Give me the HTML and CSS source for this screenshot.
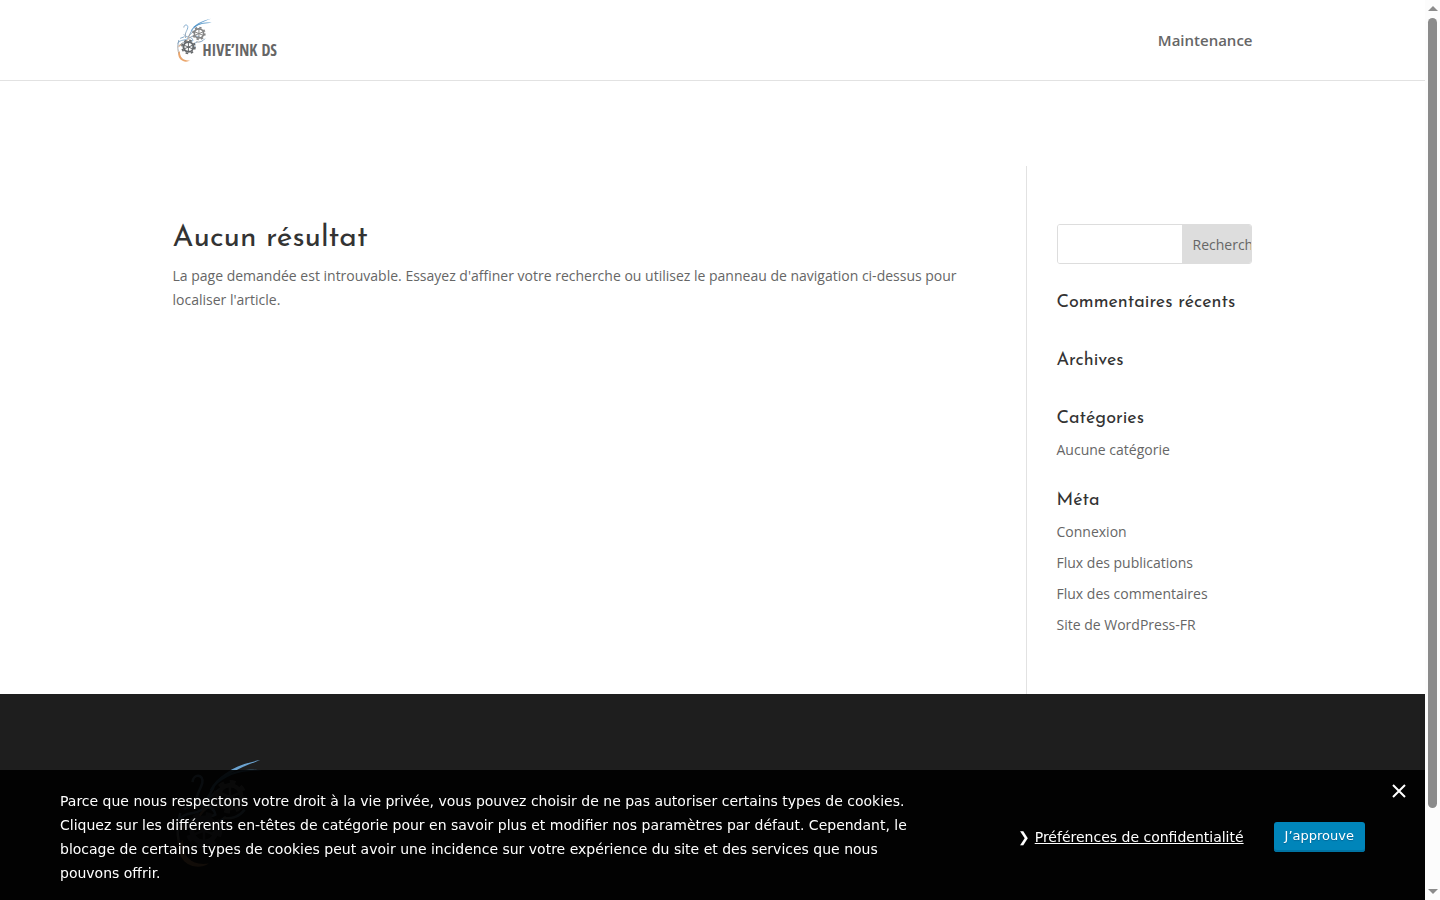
FILE: index.html
```html
<!DOCTYPE html>
<html lang="fr">
<head>
    <meta charset="UTF-8"/>
    <meta name="viewport" content="width=device-width, initial-scale=1"/>
    <title>Page non trouvée | Hive'Ink DS</title>
    <link rel="stylesheet" href="styles.css">
</head>
<body>
<svg class="sprite" aria-hidden="true">
    <defs>
        <linearGradient id="ink" x1="1" y1="0" x2="0" y2="1">
            <stop offset="0" stop-color="#7fb0d8"/>
            <stop offset="0.6" stop-color="#86a3bd"/>
            <stop offset="1" stop-color="#e3a06a"/>
        </linearGradient>
    </defs>
    <symbol id="mark" viewBox="0 0 105 140">
        <g fill="none" stroke="url(#ink)" stroke-width="3">
            <path d="M20 32C21 21 34 22 32 33C29 44 21 51 26 64"/>
            <path d="M20 53C28 65 45 57 48 72C36 79 17 70 7 90"/>
            <path d="M5 70C-2 92 2 121 20 132M1 80C14 66 20 74 33 65"/>
            <path d="M32 64C43 46 54 38 68 34M27 75C42 53 58 54 76 66"/>
            <path d="M9 65L22 60M3 89L16 79M42 88L61 75M45 95L56 89"/>
            <path d="M34 60C38 52 42 46 46 38M58 76C68 78 78 74 84 66"/>
        </g>
        <g fill="none" stroke="#858585">
            <circle cx="66" cy="50" r="14" stroke-width="5"/>
            <circle cx="66" cy="50" r="18" stroke-width="5" stroke-dasharray="7 7"/>
            <path d="M66 36V64M53 45L79 56M53 56L79 45" stroke-width="3"/>
        </g>
        <g fill="none" stroke="#66696c">
            <circle cx="34" cy="91" r="15" stroke-width="6"/>
            <circle cx="34" cy="91" r="20" stroke-width="5" stroke-dasharray="8 8"/>
            <path d="M34 77V105M21 86L47 97M21 97L47 86" stroke-width="3"/>
        </g>
        <path d="M8 103C7 125 20 135 40 132C24 142 2 132 3 110Z" fill="#eba66c"/>
        <path d="M41 42C51 23 75 10 103 5C79 14 57 23 44 42Z" fill="#6ba3d0"/>
        <path d="M50 30C67 17 87 15 105 18C86 18 67 20 52 33Z" fill="#5596c8"/>
    </symbol>
</svg>

<header class="header">
    <div class="container header-inner">
        <a class="logo" href="#">
            <svg class="logo-mark" aria-hidden="true"><use href="#mark"/></svg>
            <span class="logo-name">HIVE’INK DS</span>
        </a>
        <nav>
            <a class="nav-link" href="#">Maintenance</a>
        </nav>
    </div>
</header>

<main class="main">
    <div class="container content">
        <article class="article">
            <h1>Aucun résultat</h1>
            <p>La page demandée est introuvable. Essayez d'affiner votre recherche ou utilisez le panneau de navigation ci-dessus pour localiser l'article.</p>
        </article>
        <aside class="sidebar">
            <form class="search">
                <input type="text" class="search-field" aria-label="Rechercher"/>
                <button type="button" class="search-btn">Rechercher</button>
            </form>
            <section class="widget">
                <h4>Commentaires récents</h4>
            </section>
            <section class="widget">
                <h4>Archives</h4>
            </section>
            <section class="widget">
                <h4>Catégories</h4>
                <ul>
                    <li>Aucune catégorie</li>
                </ul>
            </section>
            <section class="widget">
                <h4>Méta</h4>
                <ul>
                    <li><a href="#">Connexion</a></li>
                    <li><a href="#">Flux des publications</a></li>
                    <li><a href="#">Flux des commentaires</a></li>
                    <li><a href="#">Site de WordPress-FR</a></li>
                </ul>
            </section>
        </aside>
    </div>
</main>

<footer class="footer">
    <div class="container">
        <svg class="footer-mark" aria-hidden="true"><use href="#mark"/></svg>
    </div>
</footer>

<div class="cookie-bar">
    <p class="cookie-text">Parce que nous respectons votre droit à la vie privée, vous pouvez choisir de ne pas autoriser certains types de cookies. Cliquez sur les différents en-têtes de catégorie pour en savoir plus et modifier nos paramètres par défaut. Cependant, le blocage de certains types de cookies peut avoir une incidence sur votre expérience du site et des services que nous pouvons offrir.</p>
    <div class="cookie-actions">
        <span class="cookie-prefs"><span class="chevron">❯</span><a href="#">Préférences de confidentialité</a></span>
        <button type="button" class="cookie-agree">J’approuve</button>
    </div>
    <button type="button" class="cookie-close" aria-label="Fermer">
        <svg viewBox="0 0 14 14" width="14" height="14"><path d="M1 1L13 13M13 1L1 13" stroke="#fff" stroke-width="2"/></svg>
    </button>
</div>

<div class="scrollbar" aria-hidden="true">
    <span class="arrow-up"></span>
    <span class="thumb"></span>
    <span class="arrow-down"></span>
</div>
</body>
</html>
```
FILE: styles.css
```css
* {
    box-sizing: border-box;
}

body {
    margin: 0;
    padding-right: 15px;
    min-height: 100vh;
    display: flex;
    flex-direction: column;
    background-color: #fff;
    color: #666;
    font-family: "Open Sans", Arial, sans-serif;
    font-size: 14px;
    line-height: 24px;
}

h1, h4, p, ul {
    margin: 0;
    padding: 0;
}

h1, h4 {
    color: #333;
    font-family: "Josefin Sans", Lato, sans-serif;
    font-weight: 400;
    padding-bottom: 10px;
}

h1 {
    font-size: 30px;
    line-height: 30px;
}

h4 {
    font-size: 18px;
    line-height: 18px;
}

a {
    color: inherit;
    text-decoration: none;
}

button {
    border: 0;
    cursor: pointer;
}

.sprite {
    position: absolute;
    width: 0;
    height: 0;
}

.container {
    width: 80%;
    max-width: 1080px;
    margin: 0 auto;
}

/* Header */
.header {
    border-bottom: 1px solid #e2e2e2;
}

.header-inner {
    display: flex;
    align-items: center;
    justify-content: space-between;
    height: 80px;
}

.logo {
    display: flex;
    align-items: center;
    padding-left: 4px;
}

.logo-mark {
    width: 35px;
    height: 46px;
}

.logo-name {
    margin: 20px 0 0 -9px;
    color: #666;
    font-family: "Open Sans Condensed", "Liberation Sans Narrow", "Liberation Sans", sans-serif;
    font-size: 16px;
    font-weight: 300;
}

.nav-link {
    font-size: 15px;
    font-weight: 600;
}

/* Content */
.main {
    padding-top: 85px;
}

.content {
    display: flex;
}

.article {
    flex: 1;
    padding: 58px 60px 0 0;
}

.sidebar {
    width: 227px;
    padding: 58px 1px 57px 30px;
    border-left: 1px solid #e2e2e2;
}

.search {
    display: flex;
    height: 40px;
    border: 1px solid #ddd;
    border-radius: 3px;
    overflow: hidden;
}

.search-field {
    flex: 1;
    min-width: 0;
    padding: 0 8px;
    border: 0;
    font: inherit;
}

.search-btn {
    width: 69px;
    padding: 1px 0 0 11px;
    background-color: #ddd;
    color: #666;
    font: inherit;
    text-align: left;
    white-space: nowrap;
    overflow: hidden;
}

.widget {
    margin-top: 30px;
}

.widget ul {
    list-style: none;
}

.widget li + li {
    margin-top: 7px;
}

/* Footer */
.footer {
    flex: 1;
    padding-top: 62px;
    background-color: #1e1e1e;
}

.footer-mark {
    display: block;
    width: 92px;
    height: 114px;
}

/* Cookie notice */
.cookie-bar {
    position: fixed;
    left: 0;
    right: 15px;
    bottom: 0;
    display: flex;
    justify-content: space-between;
    padding: 19px 60px 15px;
    background-color: rgba(0, 0, 0, 0.93);
    color: #fff;
    font-family: "DejaVu Sans", sans-serif;
}

.cookie-text {
    width: 65%;
}

.cookie-actions {
    display: flex;
    align-items: center;
    gap: 30px;
}

.cookie-prefs {
    display: flex;
    gap: 5px;
}

.cookie-prefs a {
    text-decoration: underline;
}

.cookie-agree {
    height: 30px;
    padding: 0 11px 3px;
    border-radius: 3px;
    background-color: #0085ba;
    box-shadow: inset 0 -2px 0 #0073a3;
    color: #fff;
    font-family: inherit;
    font-size: 13px;
    text-shadow: 0 1px 1px #006799;
}

.cookie-close {
    position: absolute;
    top: 14px;
    right: 19px;
    padding: 0;
    background: none;
    line-height: 0;
}

/* Scroll track */
.scrollbar {
    position: fixed;
    top: 0;
    right: 0;
    bottom: 0;
    width: 15px;
    display: flex;
    flex-direction: column;
    align-items: center;
    padding: 6px 0;
    background-color: #fcfcfc;
}

.thumb {
    width: 9px;
    height: 89%;
    margin: 7px 0 auto;
    border-radius: 5px;
    background-color: #8b8b8b;
}

.arrow-up, .arrow-down {
    border: 5px solid transparent;
    border-top-width: 0;
    border-bottom: 5px solid #8b8b8b;
}

.arrow-down {
    transform: rotate(180deg);
}
```
